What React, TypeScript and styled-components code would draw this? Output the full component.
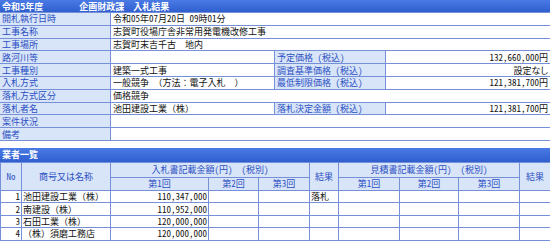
import React from 'react'
import styled, { createGlobalStyle } from 'styled-components'

const GlobalStyle = createGlobalStyle`
  html, body {
    margin: 0;
    padding: 0;
    background: #fff;
  }
  body {
    font-family: "Noto Sans CJK JP", "Noto Sans", sans-serif;
    font-size: 9px;
    line-height: 1;
    color: #111;
  }
`

const Page = styled.div`
  width: 550px;
`

const TitleBar = styled.div<{ $gap?: number }>`
  height: 12px;
  background: linear-gradient(#4a7ae4, #2f5fcf);
  color: #fff;
  font-weight: bold;
  display: flex;
  align-items: center;
  gap: ${p => p.$gap ?? 0}px;
  padding-left: 2px;
  white-space: nowrap;
`

const ListBar = styled(TitleBar)`
  height: 14px;
  margin-top: 7px;
`

const InfoGrid = styled.div`
  display: grid;
  grid-template-columns: 110px 163px 110px 1fr;
  grid-auto-rows: 11.8px;
  gap: 1px;
  padding: 1px 0;
  background: #7590d8;
`

const Label = styled.div`
  background: #d8e4f7;
  color: #2c50c4;
  padding-left: 2px;
  display: flex;
  align-items: center;
  white-space: nowrap;
  overflow: hidden;
  font-feature-settings: "hwid";
`

const Value = styled.div<{ $span?: number; $right?: boolean; $feat?: string }>`
  background: #fff;
  grid-column: span ${p => p.$span ?? 1};
  display: flex;
  align-items: center;
  justify-content: ${p => (p.$right ? 'flex-end' : 'flex-start')};
  padding: 0 2px;
  white-space: nowrap;
  font-feature-settings: ${p => (p.$feat ? `"${p.$feat}"` : 'normal')};
`

const ListTable = styled.table`
  width: 550px;
  border-collapse: collapse;
  table-layout: fixed;
`

const Row = styled.tr<{ $h: number }>`
  height: ${p => p.$h}px;
`

const Th = styled.th`
  background: #d8e4f7;
  color: #2c50c4;
  font-weight: normal;
  border: 1px solid #7590d8;
  padding: 0;
  text-align: center;
  white-space: nowrap;
  font-feature-settings: "hwid";
`

const Td = styled.td<{ $align?: 'left' | 'right' }>`
  border: 1px solid #7590d8;
  padding: 0 1px;
  text-align: ${p => p.$align ?? 'left'};
  white-space: nowrap;
  font-feature-settings: ${p => (p.$align === 'right' ? '"hwid"' : 'normal')};
`

const colWidths = [21, 89, 98, 50, 51, 29, 61, 59, 61, 31]

const bidders = [
  { no: 1, name: '池田建設工業（株）', bid: '110,347,000', result: '落札' },
  { no: 2, name: '南建設（株）', bid: '110,952,000', result: '' },
  { no: 3, name: '石田工業（株）', bid: '120,000,000', result: '' },
  { no: 4, name: '（株）須磨工務店', bid: '120,000,000', result: '' },
]

export default function App() {
  return (
    <Page>
      <GlobalStyle />
      <TitleBar $gap={36}>
        <span>令和5年度</span>
        <span>企画財政課　入札結果</span>
      </TitleBar>
      <InfoGrid>
        <Label>開札執行日時</Label>
        <Value $span={3} $feat="hwid">令和05年07月20日 09時01分</Value>
        <Label>工事名称</Label>
        <Value $span={3}>志賀町役場庁舎非常用発電機改修工事</Value>
        <Label>工事場所</Label>
        <Value $span={3}>志賀町末吉千古　地内</Value>
        <Label>路河川等</Label>
        <Value />
        <Label>予定価格　(税込)</Label>
        <Value $right $feat="hwid">132,660,000円</Value>
        <Label>工事種別</Label>
        <Value>建築一式工事</Value>
        <Label>調査基準価格　(税込)</Label>
        <Value $right $feat="palt">設定なし</Value>
        <Label>入札方式</Label>
        <Value>一般競争　（方法：電子入札　）</Value>
        <Label>最低制限価格　(税込)</Label>
        <Value $right $feat="hwid">121,381,700円</Value>
        <Label>落札方式区分</Label>
        <Value $span={3}>価格競争</Value>
        <Label>落札者名</Label>
        <Value>池田建設工業（株）</Value>
        <Label>落札決定金額　(税込)</Label>
        <Value $right $feat="hwid">121,381,700円</Value>
        <Label>案件状況</Label>
        <Value $span={3} />
        <Label>備考</Label>
        <Value $span={3} />
      </InfoGrid>

      <ListBar>
        <span>業者一覧</span>
      </ListBar>
      <ListTable>
        <colgroup>
          {colWidths.map((w, i) => (
            <col key={i} style={{ width: w }} />
          ))}
        </colgroup>
        <thead>
          <Row $h={15}>
            <Th rowSpan={2}>No</Th>
            <Th rowSpan={2}>商号又は名称</Th>
            <Th colSpan={3}>入札書記載金額(円)　 (税別)</Th>
            <Th rowSpan={2}>結果</Th>
            <Th colSpan={3}>見積書記載金額(円)　 (税別)</Th>
            <Th rowSpan={2}>結果</Th>
          </Row>
          <Row $h={13}>
            <Th>第１回</Th>
            <Th>第２回</Th>
            <Th>第３回</Th>
            <Th>第１回</Th>
            <Th>第２回</Th>
            <Th>第３回</Th>
          </Row>
        </thead>
        <tbody>
          {bidders.map(b => (
            <Row $h={12.4} key={b.no}>
              <Td $align="right">{b.no}</Td>
              <Td>{b.name}</Td>
              <Td $align="right">{b.bid}</Td>
              <Td />
              <Td />
              <Td>{b.result}</Td>
              <Td />
              <Td />
              <Td />
              <Td />
            </Row>
          ))}
        </tbody>
      </ListTable>
    </Page>
  )
}
